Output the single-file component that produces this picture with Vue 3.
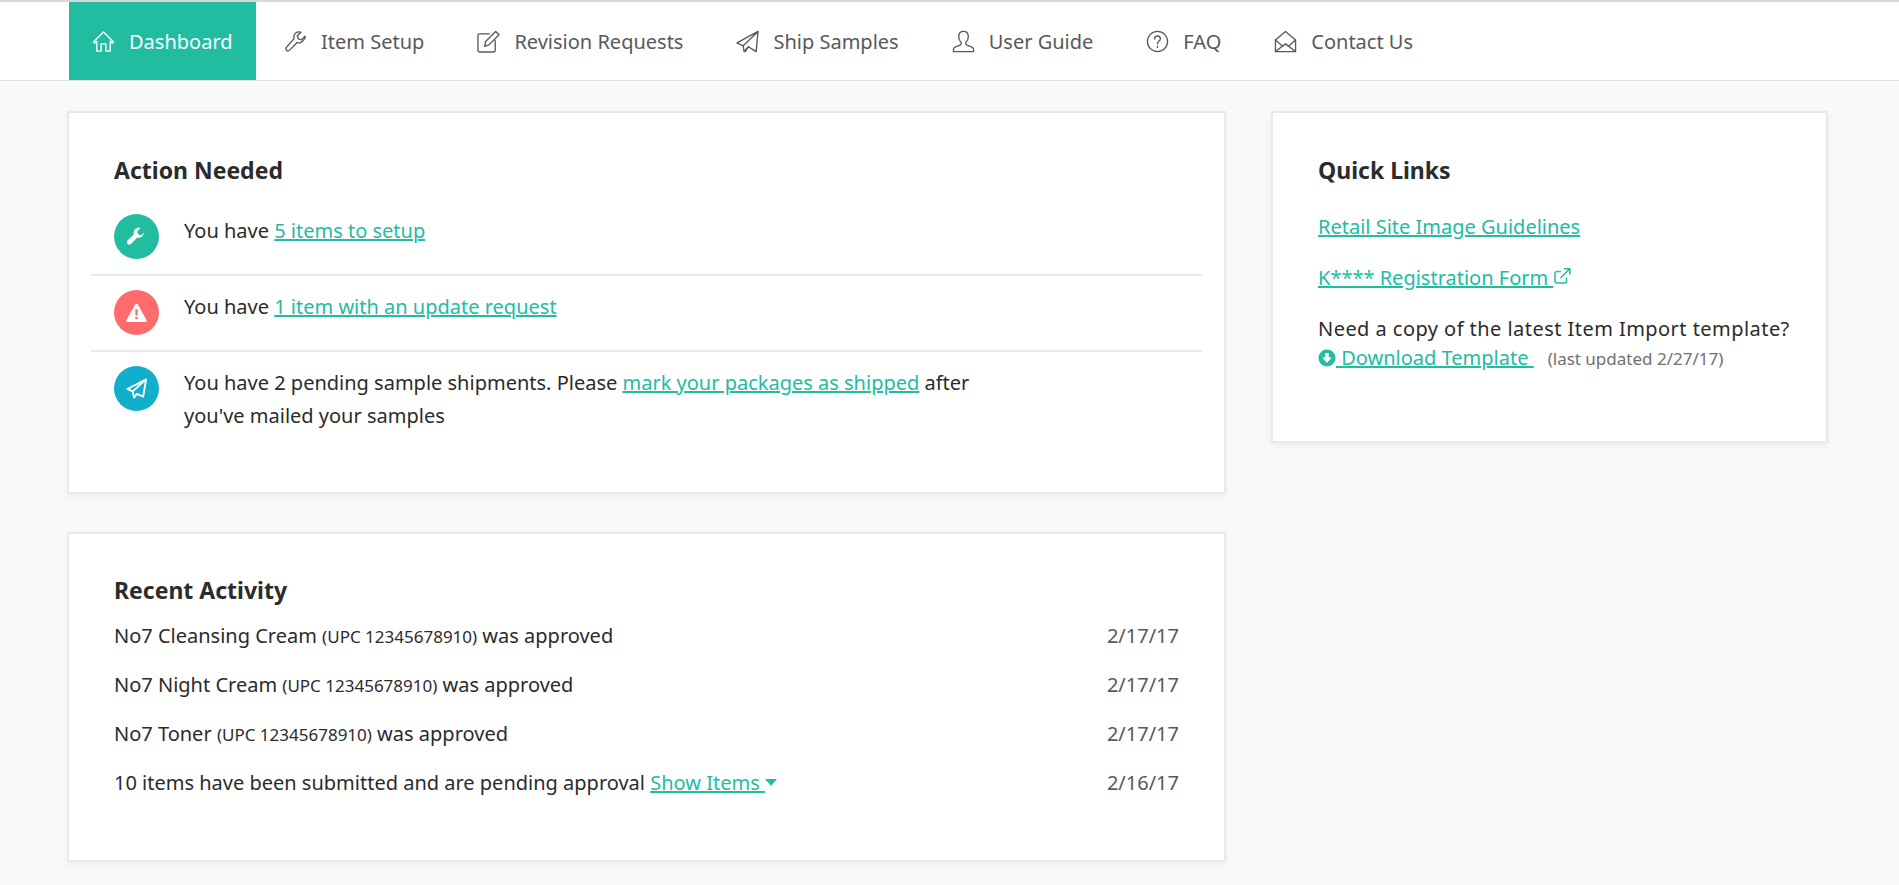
<template>
  <div class="page">
    <nav class="nav">
      <a v-for="item in navItems" :key="item.label" :class="['nav-item', { active: item.active }]">
        <svg class="nav-icon" viewBox="0 0 24 24" fill="none" stroke="currentColor" stroke-width="1.400" stroke-linejoin="round" stroke-linecap="round">
          <path v-for="d in item.paths" :key="d" :d="d" />
        </svg>
        <span>{{ item.label }}</span>
      </a>
    </nav>

    <main class="content">
      <div class="left-col">
        <section class="card action-card">
          <h2 class="card-title">Action Needed</h2>
          <div class="action-row">
            <span class="circle green">
              <svg viewBox="0 0 24 24" fill="#fff"><path d="M20.500 7.200l-3.600 3.400-3.200-.9-.9-3.100 3.500-3.500c-2.300-.7-4.600-.1-6 1.600-1.200 1.400-1.500 3.200-1 4.900l-6.600 6.600c-1 1-1 2.500 0 3.500s2.500 1 3.500 0l6.600-6.600c1.700.5 3.600.1 5-1.200 1.500-1.300 2.400-3.700 1.700-5.700z" /></svg>
            </span>
            <p>You have <a class="link">5 items to setup</a></p>
          </div>
          <div class="action-row">
            <span class="circle red">
              <svg viewBox="0 0 24 24"><path fill="#fff" d="M12 2.800c.6 0 1.100.3 1.400.8l9 16.200c.6 1-.2 2.200-1.400 2.200H3c-1.200 0-2-1.200-1.400-2.200l9-16.200c.3-.5.800-.8 1.400-.8z" /><rect x="10.800" y="8.500" width="2.400" height="6.500" fill="#ff6b6b" /><rect x="10.800" y="16.500" width="2.400" height="2.500" fill="#ff6b6b" /></svg>
            </span>
            <p>You have <a class="link">1 item with an update request</a></p>
          </div>
          <div class="action-row last">
            <span class="circle blue">
              <svg viewBox="0 0 24 24" fill="none" stroke="#fff" stroke-width="2" stroke-linejoin="round"><path d="M22 2.500L2.500 12.500l5.500 2.500L22 2.500l-3 18-6.500-3L9.500 21.500 8 15" /></svg>
            </span>
            <p class="narrow">You have 2 pending sample shipments. Please <a class="link">mark your packages as shipped</a> after you've mailed your samples</p>
          </div>
        </section>

        <section class="card activity-card">
          <h2 class="card-title">Recent Activity</h2>
          <div v-for="row in activity" :key="row.name" class="activity-row">
            <p>{{ row.name }} <small>(UPC 12345678910)</small> was approved</p>
            <span class="date">{{ row.date }}</span>
          </div>
          <div class="activity-row">
            <p>10 items have been submitted and are pending approval <a class="link">Show Items&nbsp;</a><span class="caret"></span></p>
            <span class="date">2/16/17</span>
          </div>
        </section>
      </div>

      <aside class="card links-card">
        <h2 class="card-title">Quick Links</h2>
        <p class="quick-link"><a class="link">Retail Site Image Guidelines</a></p>
        <p class="quick-link">
          <a class="link">K**** Registration Form&nbsp;</a><svg class="ext-icon" viewBox="0 0 18 18" fill="none" stroke="#22bca1" stroke-width="1.500"><path d="M13.500 10.500v3.500a2 2 0 0 1-2 2H4a2 2 0 0 1-2-2V6.500a2 2 0 0 1 2-2h4" /><path d="M7.500 11L16 2.500M11 1.800h5.800v5.700" /></svg>
        </p>
        <p class="template">Need a copy of the latest Item Import template?</p>
        <p class="download">
          <svg class="down-icon" viewBox="0 0 18 18"><circle cx="9" cy="9" r="8.500" fill="#22bca1" /><path d="M7.200 4h3.600v4.500h3L9 14 4.200 8.500h3z" fill="#fff" /></svg>
          <a class="link">&nbsp;Download Template&nbsp;</a>
          <small class="updated">(last updated 2/27/17)</small>
        </p>
      </aside>
    </main>
  </div>
</template>

<script setup>
const navItems = [
  { label: 'Dashboard', active: true, paths: ['M1.500 12.500L12 2l10.500 10.500-1.300 1.300-2.200-2V22h-4.500v-7.500h-5V22H5V11.800l-2.200 2z'] },
  { label: 'Item Setup', paths: ['M22 6.500l-3.800 3.700-3.400-.9-.9-3.300 3.700-3.700c-2.500-.8-5 0-6.300 1.700-1.200 1.500-1.400 3.400-.8 5L2.800 17.800c-1.100 1.100-1.100 2.400-.2 3.300s2.200.9 3.300-.1l7.800-7.900c1.700.6 3.800.3 5.300-1.100 1.700-1.500 3.600-3.400 3-5.500z'] },
  { label: 'Revision Requests', paths: ['M13 4H2.500A1.500 1.500 0 0 0 1 5.500v16A1.500 1.500 0 0 0 2.500 23h15a1.500 1.500 0 0 0 1.500-1.500V11', 'M8 17l1-5L19.500 1.500l3.500 3.500L12.500 15.500z'] },
  { label: 'Ship Samples', paths: ['M23 1.500L1 13.500l6.500 3L23 1.500l-2 21-8-5-4.500 5-1-6', 'M9.500 22.500l3.500-5'] },
  { label: 'User Guide', paths: ['M12 1.500c-3 0-5 2.300-5 5.500 0 2.400 1 4.500 2.500 5.700v1.800c0 1.200-3 2-5.500 3-1.600.6-2.500 1.400-2.500 2.500v2.500h21V20c0-1.100-.9-1.900-2.500-2.500-2.500-1-5.500-1.800-5.500-3v-1.800c1.500-1.200 2.500-3.300 2.500-5.700 0-3.200-2-5.500-5-5.500z'] },
  { label: 'FAQ', paths: ['M12 1.500a10.500 10.500 0 1 0 0 21 10.500 10.500 0 0 0 0-21z', 'M9 9.500c0-2 1.300-3.200 3-3.200s3 1.200 3 2.800c0 2.400-3 2.600-3 5.200', 'M12 17v1.200'] },
  { label: 'Contact Us', paths: ['M1.500 10.500L12 1.500l10.500 9V22.500h-21z', 'M1.500 10.500l7.500 6.500M22.500 10.500L15 17', 'M1.500 22.500L12 14.500l10.500 8'] },
]

const activity = [
  { name: 'No7 Cleansing Cream', date: '2/17/17' },
  { name: 'No7 Night Cream', date: '2/17/17' },
  { name: 'No7 Toner', date: '2/17/17' },
]
</script>

<style>
html,
body {
  margin: 0;
  background: #f9f9f9;
}
</style>

<style scoped>
.page {
  font-family: "Noto Sans", "Open Sans", sans-serif;
  font-size: 20px;
  color: #2b2b2b;
  height: 885px;
  overflow: hidden;
  background: #f9f9f9;
}

p {
  margin: 0;
}

.nav {
  display: flex;
  height: 78px;
  padding-left: 69px;
  background: #fff;
  border-top: 2px solid #d8d8d8;
  border-bottom: 1px solid #e0e0e0;
}

.nav-item {
  display: flex;
  align-items: center;
  gap: 14px;
  padding: 0 25px 0 28px;
  color: #58595b;
}

.nav-item.active {
  padding: 0 23.5px 0 23px;
  background: #22bca1;
  color: #fff;
}

.nav-icon {
  width: 23px;
  height: 23px;
  flex: none;
}

.content {
  display: grid;
  grid-template-columns: 1159px 557px;
  gap: 45px;
  padding: 30px 0 0 67px;
  align-items: start;
}

.left-col {
  display: flex;
  flex-direction: column;
  gap: 38px;
}

.card {
  box-sizing: border-box;
  background: #fff;
  border: 2px solid #e9e9e9;
  box-shadow: 0 3px 6px rgba(0, 0, 0, 0.05);
}

.action-card {
  height: 383px;
  padding: 42px 22px 0;
}

.activity-card {
  height: 330px;
  padding: 41px 45px 0;
}

.links-card {
  height: 332px;
  padding: 42px 45px 0;
}

.card-title {
  margin: 0;
  font-size: 23px;
  line-height: 30px;
  font-weight: 700;
  color: #2b2b2b;
}

.action-card .card-title {
  padding-left: 23px;
  margin-bottom: 29px;
}

.action-row {
  display: flex;
  gap: 25px;
  padding: 0 23px 15px;
  margin-bottom: 14px;
  border-bottom: 2px solid #e9e9e9;
  line-height: 33px;
}

.action-row.last {
  border-bottom: none;
}

.narrow {
  width: 820px;
}

.circle {
  flex: none;
  display: flex;
  align-items: center;
  justify-content: center;
  width: 45px;
  height: 45px;
  border-radius: 50%;
}

.circle svg {
  width: 23px;
  height: 23px;
}

.green {
  background: #22bca1;
}

.red {
  background: #ff6b6b;
}

.blue {
  background: #12aecd;
}

.link {
  color: #22bca1;
  text-decoration: underline;
}

.activity-card .card-title {
  margin-bottom: 14px;
}

.activity-row {
  display: flex;
  justify-content: space-between;
  height: 33px;
  line-height: 33px;
  margin-bottom: 16px;
}

small {
  font-size: 17px;
  line-height: 1;
}

.date {
  color: #58595b;
}

.caret {
  display: inline-block;
  vertical-align: 4px;
  border-top: 7px solid #22bca1;
  border-left: 6px solid transparent;
  border-right: 6px solid transparent;
}

.links-card .card-title {
  margin-bottom: 25px;
}

.quick-link {
  line-height: 33px;
  margin-bottom: 18px;
}

.ext-icon {
  width: 18px;
  height: 18px;
  vertical-align: 0;
}

.template {
  line-height: 33px;
  letter-spacing: 0.45px;
  white-space: nowrap;
}

.download {
  line-height: 26px;
}

.down-icon {
  width: 18px;
  height: 18px;
  vertical-align: -2px;
}

.updated {
  color: #6f6f6f;
  margin-left: 14px;
}
</style>
